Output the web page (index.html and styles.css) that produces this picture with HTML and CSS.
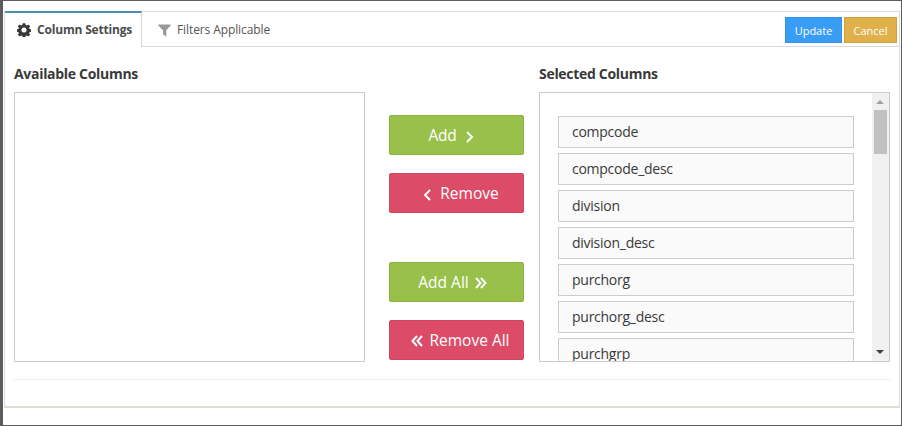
FILE: index.html
```html
<!DOCTYPE html>
<html lang="en">
<head>
<meta charset="utf-8">
<title>Column Settings</title>
<link rel="stylesheet" href="styles.css">
</head>
<body>
<main class="modal">
  <section class="panel">
    <header class="bar">
      <div class="tab tab-active">
        <svg class="gear" viewBox="0 0 14 14"><path fill-rule="evenodd" d="M5.7.3h2.6l.4 1.8 1 .4 1.6-1 1.8 1.8-1 1.6.4 1 1.8.4v2.5l-1.8.4-.4 1 1 1.6-1.8 1.8-1.6-1-1 .4-.4 1.7H5.7L5.3 13l-1-.4-1.6 1-1.8-1.8 1-1.6-.4-1L0 8.8V6.3l1.5-.4.4-1-1-1.6 1.8-1.8 1.6 1 1-.4zM7 4.6a2.5 2.5 0 1 0 0 5 2.5 2.5 0 0 0 0-5z"/></svg>
        <span>Column Settings</span>
      </div>
      <div class="tab">
        <svg class="funnel" viewBox="0 0 13 13"><path d="M.3.5h12.4v1L8.3 6.2v6.5L5 10.2v-4L.3 1.5z"/></svg>
        <span>Filters Applicable</span>
      </div>
      <div class="actions">
        <button class="small update">Update</button>
        <button class="small cancel">Cancel</button>
      </div>
    </header>
    <div class="content">
      <div class="column">
        <h2>Available Columns</h2>
        <div class="box"></div>
      </div>
      <div class="moves">
        <button class="move add add-one"><span>Add</span><svg class="single" viewBox="0 0 9 12"><path d="M2 1 7 6 2 11"/></svg></button>
        <button class="move remove"><svg class="single" viewBox="0 0 9 12"><path d="M7 1 2 6 7 11"/></svg><span>Remove</span></button>
        <button class="move add add-all"><span>Add All</span><svg class="double" viewBox="0 0 12 12"><path d="M1 1 5.5 6 1 11M6 1 10.5 6 6 11"/></svg></button>
        <button class="move remove remove-all"><svg class="double" viewBox="0 0 12 12"><path d="M6 1 1.5 6 6 11M11 1 6.5 6 11 11"/></svg><span>Remove All</span></button>
      </div>
      <div class="column">
        <h2>Selected Columns</h2>
        <div class="box list">
          <ul>
            <li>compcode</li>
            <li>compcode_desc</li>
            <li>division</li>
            <li>division_desc</li>
            <li>purchorg</li>
            <li>purchorg_desc</li>
            <li>purchgrp</li>
          </ul>
          <div class="scroll">
            <svg class="up" viewBox="0 0 8 4"><path d="M0 4 4 0l4 4z"/></svg>
            <div class="thumb"></div>
            <svg class="down" viewBox="0 0 8 4"><path d="M0 0h8L4 4z"/></svg>
          </div>
        </div>
      </div>
    </div>
    <hr>
  </section>
</main>
</body>
</html>
```
FILE: styles.css
```css
* { box-sizing: border-box; }
body {
  margin: 0;
  height: 426px;
  padding: 1px 1px 1px 3px;
  overflow: hidden;
  background: #5c5c5e;
  font-family: "Open Sans", sans-serif;
  color: #393939;
}
svg { display: block; flex: none; }
button { font-family: inherit; color: #fff; white-space: nowrap; padding: 0; }
.modal { height: 424px; padding: 10px 0 0 1px; background: #fff; }
.panel {
  width: 896px;
  height: 397px;
  border: solid #dadfd6;
  border-width: 1px 1px 2px;
}
.bar {
  display: flex;
  height: 35px;
  border-bottom: 1px solid #d8dadb;
}
.tab {
  display: flex;
  align-items: center;
  padding: 2px 0 0 16px;
  font-size: 12px;
  line-height: 20px;
  letter-spacing: -.1px;
  color: #555;
  white-space: nowrap;
}
.tab-active {
  width: 137px;
  height: 36px;
  margin-top: -1px;
  padding: 0 0 0 12px;
  border-top: 2px solid #4c8fa8;
  border-right: 1px solid #d3d6d8;
  background: #fff;
  font-weight: 700;
  letter-spacing: -.18px;
  color: #4c4c4c;
}
.gear { width: 14px; height: 14px; margin-right: 6px; fill: #393939; }
.funnel { width: 13px; height: 13px; margin-right: 6px; fill: #999; }
.actions { display: flex; gap: 2px; margin: 5px 2px 0 auto; }
.small { height: 26px; border: 1px solid; font-size: 11px; }
.update { width: 57px; background: #3a9df5; border-color: #3293e8; }
.cancel { width: 53px; background: #e0b04b; border-color: #cf9f40; }
.content { display: flex; padding: 17px 0 0 9px; }
.column { width: 351px; }
h2 { margin: 0 0 8px; font-size: 14px; line-height: 20px; font-weight: 700; letter-spacing: -.3px; }
.box { height: 270px; border: 1px solid #ccc; }
.moves { width: 135px; margin: 51px 15px 0 24px; }
.move {
  display: flex;
  align-items: center;
  justify-content: center;
  width: 135px;
  height: 40px;
  border: 1px solid;
  border-radius: 2px;
  font-size: 15.5px;
}
.move path { fill: none; stroke: #fff; stroke-width: 2; }
.add { background: #98c04a; border-color: #8bb13e; }
.add-one { gap: 9px; padding-right: 10px; letter-spacing: -.3px; }
.remove { gap: 8px; margin-top: 18px; padding-left: 9px; background: #dc4b68; border-color: #cf4560; }
.single { width: 9px; height: 12px; margin-top: 3px; }
.double { width: 12px; height: 12px; margin-top: 2px; }
.add-all { gap: 6px; margin-top: 49px; padding-right: 8px; }
.remove-all { gap: 6px; padding-left: 8px; }
.list { display: flex; justify-content: space-between; overflow: hidden; }
ul { margin: 23px 0 0 18px; padding: 0; list-style: none; }
li {
  width: 296px;
  height: 32px;
  margin-bottom: 5px;
  padding-left: 13px;
  border: 1px solid #ccc;
  background: #fafafa;
  font-size: 14px;
  line-height: 30px;
  letter-spacing: -.26px;
}
.scroll {
  display: flex;
  flex-direction: column;
  align-items: center;
  width: 17px;
  background: #f0f0f0;
}
.up { width: 8px; height: 4px; margin: 7px 1px 6px 0; fill: #a0a0a0; }
.thumb { width: 13px; height: 44px; background: #c1c1c1; }
.down { width: 8px; height: 4px; margin: auto 1px 7px 0; fill: #404040; }
hr { margin: 17px 9px 0; border: 0; border-top: 1px solid #eee; }
```
